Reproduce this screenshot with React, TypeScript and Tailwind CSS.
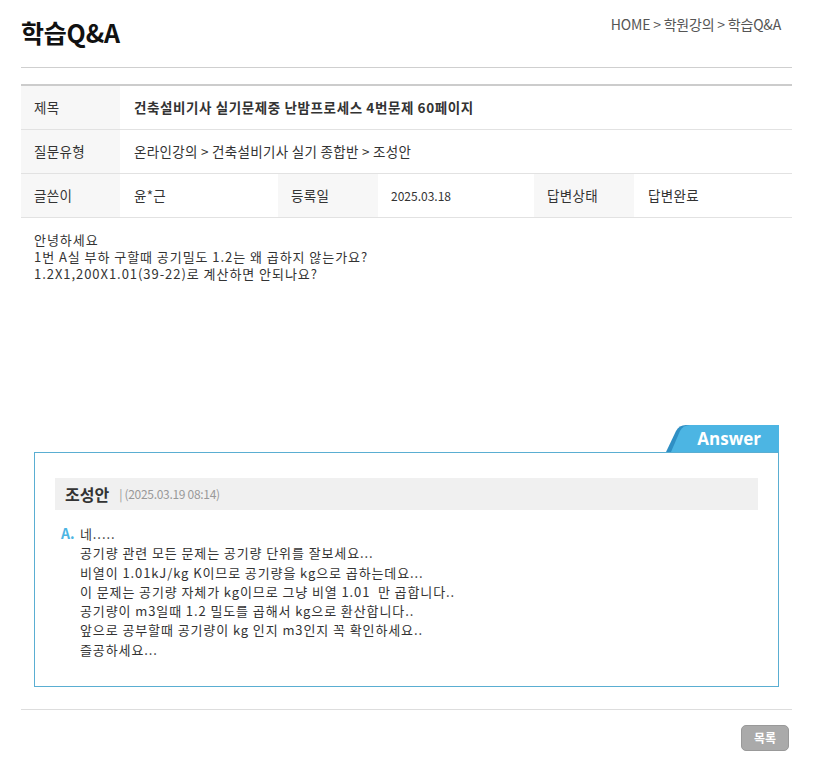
const font = "font-['Noto_Sans_CJK_KR','Noto_Sans',sans-serif]";

const answerLines = [
  '네.....',
  '공기량 관련 모든 문제는 공기량 단위를 잘보세요...',
  '비열이 1.01kJ/kg K이므로 공기량을 kg으로 곱하는데요...',
  '이 문제는 공기량 자체가 kg이므로 그냥 비열 1.01  만 곱합니다..',
  '공기량이 m3일때 1.2 밀도를 곱해서 kg으로 환산합니다..',
  '앞으로 공부할때 공기량이 kg 인지 m3인지 꼭 확인하세요..',
  '즐공하세요...',
];

function Label({ children }: { children: React.ReactNode }) {
  return <div className="bg-[#f7f7f7] pl-[13px] flex items-center">{children}</div>;
}

export default function App() {
  return (
    <div className={`w-[813px] bg-white text-[#333] ${font}`}>
      <div className="mx-[21px]">
        {/* header */}
        <div className="h-[68px] flex justify-between border-b border-[#cfcfcf]">
          <h1 className="pt-[15px] text-[25px] font-bold tracking-[-0.2px] text-[#111] leading-[34px]">학습Q&amp;A</h1>
          <div className="pt-[13px] pr-[11px] text-[14px] text-[#555] tracking-[-0.2px] leading-[22px]">
            HOME &gt; 학원강의 &gt; 학습Q&amp;A
          </div>
        </div>

        {/* info table */}
        <div className="mt-[16px] border-t-2 border-[#cccccc] text-[13.5px] tracking-[0.3px]">
          <div className="grid grid-cols-[99px_1fr] h-[44px] border-b border-[#e2e2e2]">
            <Label>제목</Label>
            <div className="pl-[14px] flex items-center font-bold tracking-[0.6px]">건축설비기사 실기문제중 난밤프로세스 4번문제 60페이지</div>
          </div>
          <div className="grid grid-cols-[99px_1fr] h-[44px] border-b border-[#e2e2e2]">
            <Label>질문유형</Label>
            <div className="pl-[14px] flex items-center">온라인강의 &gt; 건축설비기사 실기 종합반 &gt; 조성안</div>
          </div>
          <div className="grid grid-cols-[99px_158px_100px_156px_100px_1fr] h-[44px] border-b border-[#e2e2e2]">
            <Label>글쓴이</Label>
            <div className="pl-[14px] flex items-center">윤*근</div>
            <Label>등록일</Label>
            <div className="pl-[13px] flex items-center text-[12px] tracking-normal">2025.03.18</div>
            <Label>답변상태</Label>
            <div className="pl-[14px] flex items-center">답변완료</div>
          </div>
        </div>

        {/* question body */}
        <div className="h-[207px] pt-[13px] pl-[13px] text-[13px] tracking-[0.95px] leading-[17px] text-[#333]">
          <p>안녕하세요</p>
          <p>1번 A실 부하 구할때 공기밀도 1.2는 왜 곱하지 않는가요?</p>
          <p>1.2X1,200X1.01(39-22)로 계산하면 안되나요?</p>
        </div>

        {/* answer */}
        <div className="mx-[13px]">
          <div className="flex justify-end">
            <div className="relative w-[113px] h-[27px]">
              <svg width="113" height="27" viewBox="0 0 113 27" className="absolute inset-0">
                <path d="M0 27 L10 6 Q13 0 20 0 L113 0 L113 27 Z" fill="#2f8fc4" />
                <path d="M5 27 L14 6 Q17 0 24 0 L113 0 L113 27 Z" fill="#4cb5e3" />
              </svg>
              <span className="absolute right-[18px] top-[2px] text-[17px] font-bold text-white leading-[23px] font-['Open_Sans',sans-serif]">
                Answer
              </span>
            </div>
          </div>
          <div className="h-[235px] border border-[#5aaed2] px-[20px] pt-[25px]">
            <div className="h-[32px] bg-[#f0f0f0] flex items-center pl-[10px]">
              <span className="text-[16px] font-bold text-[#333]">조성안</span>
              <span className="ml-[10px] text-[12px] text-[#999] tracking-[-0.3px]">| (2025.03.19 08:14)</span>
            </div>
            <div className="flex pl-[6px] pt-[14px] text-[13px] tracking-[0.9px] leading-[19.3px] text-[#333]">
              <span className="w-[19px] text-[14px] font-bold text-[#4cb5e3] tracking-normal">A.</span>
              <div>
                {answerLines.map((l, i) => (
                  <p key={i} className="whitespace-pre">{l}</p>
                ))}
              </div>
            </div>
          </div>
        </div>

        {/* footer */}
        <div className="mt-[22px] border-t border-[#dddddd] pt-[15px] pb-[10px] flex justify-end">
          <button className="w-[48px] h-[26px] mr-[3px] rounded-[5px] bg-[#aaaaaa] border border-[#999] text-white text-[12px] font-bold">
            목록
          </button>
        </div>
      </div>
    </div>
  );
}
